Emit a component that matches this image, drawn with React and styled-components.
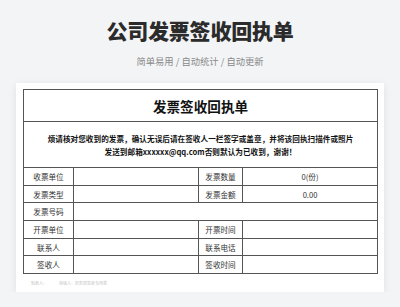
import React from 'react';
import styled, {createGlobalStyle} from 'styled-components';

const GlobalStyle = createGlobalStyle`
    body{
        margin: 0;
        background: #f3f4f6;
        font-family: "Noto Sans CJK SC", "Noto Sans", sans-serif;
    }
`

const rows = [
    ['收票单位', '', '发票数量', '0(份)'],
    ['发票类型', '', '发票金额', '0.00'],
    ['发票号码', null],
    ['开票单位', '', '开票时间', ''],
    ['联系人', '', '联系电话', ''],
    ['签收人', '', '签收时间', ''],
];

const App = () =>{
    return(
        <>
            <GlobalStyle/>
            <Header>
                <Title>公司发票签收回执单</Title>
                <Subtitle>简单易用 / 自动统计 / 自动更新</Subtitle>
            </Header>
            <Card>
                <Sheet>
                    <colgroup>
                        <col style={{width: 50}}/>
                        <col style={{width: 125}}/>
                        <col style={{width: 44}}/>
                        <col style={{width: 135}}/>
                    </colgroup>
                    <tbody>
                        <tr>
                            <SheetTitle colSpan={4}>发票签收回执单</SheetTitle>
                        </tr>
                        <tr>
                            <Notice colSpan={4}>
                                烦请核对您收到的发票，确认无误后请在签收人一栏签字或盖章，并将该回执扫描件或照片<br/>
                                发送到邮箱xxxxxx@qq.com否则默认为已收到，谢谢！
                            </Notice>
                        </tr>
                        {rows.map((r, i) =>(
                            <tr key={i}>
                                <Cell>{r[0]}</Cell>
                                {r[1] === null ? (
                                    <Cell colSpan={3}></Cell>
                                ) : (
                                    <>
                                        <Cell>{r[1]}</Cell>
                                        <Cell>{r[2]}</Cell>
                                        <Cell>{r[3]}</Cell>
                                    </>
                                )}
                            </tr>
                        ))}
                    </tbody>
                </Sheet>
                <Footer>
                    <span>制表人：</span>
                    <span>审核人：财务部签收专用章</span>
                </Footer>
            </Card>
        </>
    )
}

const Header = styled.div`
    display: flex;
    flex-direction: column;
    align-items: center;
    padding-top: 17px;
    height: 66px;
`
const Title = styled.h1`
    margin: 0;
    font-size: 21px;
    line-height: 26px;
    font-weight: 900;
    color: #2b2b2b;
    letter-spacing: -0.2px;
`
const Subtitle = styled.div`
    margin-top: 12px;
    font-size: 9.3px;
    line-height: 13px;
    color: #8a8a8a;
`
const Card = styled.div`
    margin: 0 16px;
    background: #fff;
    padding: 6px 7px 6px;
    box-shadow: 0 2px 8px rgba(0,0,0,0.08);
`
const Sheet = styled.table`
    width: 100%;
    border-collapse: collapse;
    table-layout: fixed;
    border: 1px solid #555;
    color: #333;
`
const SheetTitle = styled.td`
    border: 1px solid #555;
    height: 31px;
    padding: 0;
    text-align: center;
    font-size: 13.6px;
    font-weight: 700;
    color: #111;
`
const Notice = styled.td`
    border: 1px solid #555;
    height: 45px;
    padding: 0;
    text-align: center;
    font-size: 7.6px;
    line-height: 13px;
    font-weight: 700;
    color: #111;
    letter-spacing: 0.05px;
`
const Cell = styled.td`
    border: 1px solid #555;
    height: 16.7px;
    padding: 0;
    text-align: center;
    font-size: 7.6px;
    color: #333;
`
const Footer = styled.div`
    display: flex;
    gap: 12px;
    padding: 6px 8px 0;
    font-size: 4px;
    line-height: 6px;
    color: #c4c4c4;
`

export default App;
